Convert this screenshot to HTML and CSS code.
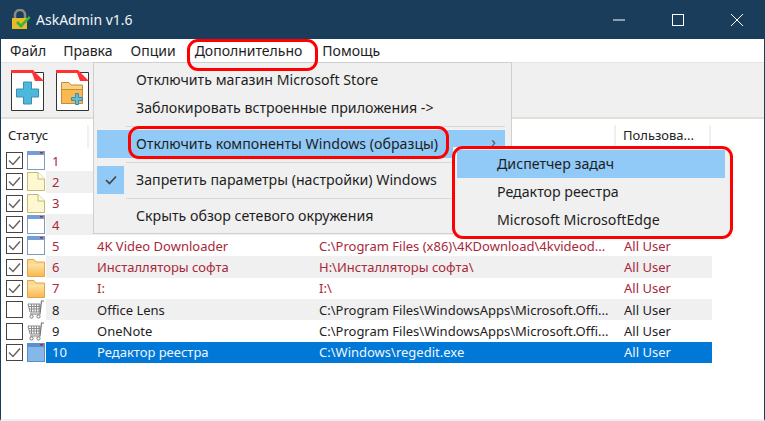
FILE: index.html
```html
<!DOCTYPE html>
<html lang="ru">
<head>
<meta charset="utf-8">
<title>AskAdmin v1.6</title>
<link rel="stylesheet" href="styles.css">
</head>
<body>
<svg class="defs" width="0" height="0">
  <defs>
    <linearGradient id="fold" x1="0" y1="0" x2="0" y2="1"><stop offset="0" stop-color="#fde4a6"/><stop offset="1" stop-color="#fbb84e"/></linearGradient>
  </defs>
  <symbol id="check" viewBox="0 0 17 17"><rect x=".5" y=".5" width="16" height="16" fill="#fff" stroke="#444"/><path d="M3 8.5 7 12.5 14 4.5" fill="none" stroke="#666" stroke-width="1.5"/></symbol>
  <symbol id="box" viewBox="0 0 17 17"><rect x=".5" y=".5" width="16" height="16" fill="#fff" stroke="#444"/></symbol>
  <symbol id="win" viewBox="0 0 18 19"><rect x=".5" y=".5" width="17" height="18" fill="#fff" stroke="#7f9cbc"/><rect x="1" y="1" width="16" height="3" fill="#6f9fdc"/><rect x="13" y="1" width="3" height="1.500" fill="#c8203c"/></symbol>
  <symbol id="winsel" viewBox="0 0 18 19"><rect x=".5" y=".5" width="17" height="18" fill="#84b8e8" stroke="#5b8fc8"/><rect x="1" y="1" width="16" height="3" fill="#5a8ed0"/><rect x="13" y="1" width="3" height="1.500" fill="#c8203c"/></symbol>
  <symbol id="note" viewBox="0 0 18 19"><path d="M.5.5H11L17.5 7V18.5H.5Z" fill="#fdf8d0" stroke="#c4b878"/><path d="M11 .5V7H17.5" fill="#fffde8" stroke="#c4b878"/></symbol>
  <symbol id="folder" viewBox="0 0 18 19"><path d="M.5 18.5V1.500H7L9 4H17.500V18.5Z" fill="#fcd98c" stroke="#dca750"/><path d="M1 6H17V18H1Z" fill="url(#fold)"/></symbol>
  <symbol id="cart" viewBox="0 0 18 19"><path d="M1 4H13V12H3ZM1.500 6.500H13M2 9H13M4.500 4V12M7 4V12M9.500 4V12M12 4V12" fill="none" stroke="#8a8a8a"/><path d="M17 1H14.500L13 14H3" fill="none" stroke="#777" stroke-width="1.200"/><circle cx="4.500" cy="16.500" r="1.600" fill="#fff" stroke="#777"/><circle cx="11.500" cy="16.500" r="1.600" fill="#fff" stroke="#777"/></symbol>
</svg>
<div class="window">
  <header class="titlebar">
    <svg class="appicon" width="20" height="21" viewBox="0 0 20 21"><path d="M4 10V6a5 5 0 0 1 10 0v4" fill="none" stroke="#8a8a80" stroke-width="2.500"/><rect x="1" y="9" width="15" height="11" fill="#e8bc28"/><path d="M7 12l3 3 8-8 1.500 2L10 19l-5-5Z" fill="#3cb43c"/></svg>
    <span class="apptitle">AskAdmin v1.6</span>
    <div class="winbtns">
      <svg width="14" height="14" viewBox="0 0 14 14"><path d="M1 7H13" stroke="#fff"/></svg>
      <svg width="14" height="14" viewBox="0 0 14 14"><rect x="1.500" y="1.500" width="11" height="11" fill="none" stroke="#fff"/></svg>
      <svg width="14" height="14" viewBox="0 0 14 14"><path d="M1 1 13 13M13 1 1 13" stroke="#fff"/></svg>
    </div>
  </header>
  <nav class="menubar">
    <span class="m1">Файл</span><span class="m2">Правка</span><span class="m3">Опции</span><span class="m4">Дополнительно</span><span>Помощь</span>
  </nav>
  <div class="toolbar">
    <svg class="tool" width="34" height="41" viewBox="0 0 34 41"><path d="M.500 2.500H32.500V40.500H.500Z" fill="#fff" stroke="#333"/><path d="M0 0H22L33 11H24L21 3H0Z" fill="#f33"/><path d="M12.500 12H20.500V19H27.500V27H20.500V34H12.500V27H5.500V19H12.500Z" fill="#4cb8dc" stroke="#3a8cb0"/></svg>
    <svg class="tool" width="34" height="41" viewBox="0 0 34 41"><path d="M.500 2.500H32.500V40.500H.500Z" fill="#fff" stroke="#333"/><path d="M0 0H22L33 11H24L21 3H0Z" fill="#f33"/><path d="M5.500 12.500H13L15 15H26.500V33.500H5.500Z" fill="#f8d080" stroke="#c88a3c"/><path d="M5.500 19.500H26.500V33.500H5.500Z" fill="#fbb84e" stroke="#c88a3c"/><path d="M19.500 23.500H22.500V27.500H26.500V30.500H22.500V34.500H19.500V30.500H15.500V27.500H19.500Z" fill="#5cc0dc" stroke="#3a8cb0"/></svg>
  </div>
  <main class="list">
    <div class="head">
      <span class="hc h-status">Статус</span><span class="hc h-path"></span><span class="hc h-user">Пользова...</span>
    </div>
    <div class="row r"><svg class="ck"><use href="#check"/></svg><svg class="ic"><use href="#win"/></svg><div class="band"><span class="num">1</span></div></div>
    <div class="row r alt"><svg class="ck"><use href="#check"/></svg><svg class="ic"><use href="#note"/></svg><div class="band"><span class="num">2</span></div></div>
    <div class="row r"><svg class="ck"><use href="#check"/></svg><svg class="ic"><use href="#note"/></svg><div class="band"><span class="num">3</span></div></div>
    <div class="row r alt"><svg class="ck"><use href="#check"/></svg><svg class="ic"><use href="#win"/></svg><div class="band"><span class="num">4</span></div></div>
    <div class="row r"><svg class="ck"><use href="#check"/></svg><svg class="ic"><use href="#win"/></svg><div class="band"><span class="num">5</span><span class="name">4K Video Downloader</span><span class="path">C:\Program Files (x86)\4KDownload\4kvideod...</span><span>All User</span></div></div>
    <div class="row r alt"><svg class="ck"><use href="#check"/></svg><svg class="ic"><use href="#folder"/></svg><div class="band"><span class="num">6</span><span class="name">Инсталляторы софта</span><span class="path">H:\Инсталляторы софта\</span><span>All User</span></div></div>
    <div class="row r"><svg class="ck"><use href="#check"/></svg><svg class="ic"><use href="#folder"/></svg><div class="band"><span class="num">7</span><span class="name">I:</span><span class="path">I:\</span><span>All User</span></div></div>
    <div class="row alt"><svg class="ck"><use href="#box"/></svg><svg class="ic"><use href="#cart"/></svg><div class="band"><span class="num">8</span><span class="name">Office Lens</span><span class="path">C:\Program Files\WindowsApps\Microsoft.Offi...</span><span>All User</span></div></div>
    <div class="row"><svg class="ck"><use href="#box"/></svg><svg class="ic"><use href="#cart"/></svg><div class="band"><span class="num">9</span><span class="name">OneNote</span><span class="path">C:\Program Files\WindowsApps\Microsoft.Offi...</span><span>All User</span></div></div>
    <div class="row sel"><svg class="ck"><use href="#check"/></svg><svg class="ic"><use href="#winsel"/></svg><div class="band"><span class="num">10</span><span class="name">Редактор реестра</span><span class="path">C:\Windows\regedit.exe</span><span>All User</span></div></div>
  </main>
</div>

<div class="menu mainmenu">
  <div class="mi">Отключить магазин Microsoft Store</div>
  <div class="mi">Заблокировать встроенные приложения -&gt;</div>
  <hr class="sep">
  <div class="mi hi">Отключить компоненты Windows (образцы)<span class="arrow">›</span></div>
  <hr class="sep">
  <div class="mi"><span class="tick"><svg width="14" height="12" viewBox="0 0 14 12"><path d="M2 6 5.500 9.500 12 2.500" fill="none" stroke="#444" stroke-width="1.700"/></svg></span>Запретить параметры (настройки) Windows</div>
  <hr class="sep">
  <div class="mi">Скрыть обзор сетевого окружения</div>
</div>
<div class="menu submenu">
  <div class="si hi">Диспетчер задач</div>
  <div class="si">Редактор реестра</div>
  <div class="si">Microsoft MicrosoftEdge</div>
</div>
<div class="mark mark1"></div>
<div class="mark mark2"></div>
<div class="mark mark3"></div>
</body>
</html>
```
FILE: styles.css
```css
* { box-sizing: border-box; }
html, body { margin: 0; padding: 0; }
body { width: 765px; height: 421px; overflow: hidden; position: relative; background: #fff; font-family: "Noto Sans", "Open Sans", sans-serif; font-size: 13px; color: #222; }
.defs { position: absolute; }
.window { height: 421px; display: flex; flex-direction: column; border-left: 1px solid #1b3d5c; border-right: 1px solid #1b3d5c; border-bottom: 2px solid #f0f0f0; }
.titlebar { height: 39px; margin: 0 -1px; background: #1b3d5c; display: flex; align-items: center; padding-left: 11px; color: #fff; flex: none; }
.appicon { margin-right: 5px; }
.apptitle { font-size: 14px; color: #f2f5f8; }
.winbtns { margin-left: auto; display: flex; gap: 45px; padding-right: 21px; }
.menubar { height: 23px; flex: none; display: flex; align-items: center; padding-left: 9px; background: #fff; color: #1e1e1e; font-size: 14px; }
.m1 { margin-right: 17px; } .m2 { margin-right: 18px; } .m3 { margin-right: 19px; } .m4 { margin-right: 20px; }
.toolbar { height: 57px; flex: none; background: #f0f0f0; border-top: 1px solid #e4e4e4; border-bottom: 2px solid #e2dfd6; display: flex; align-items: flex-start; gap: 11px; padding: 7px 0 0 10px; }
.tool { display: block; }
.list { flex: 1; background: #fff; }
.head { height: 31px; display: flex; padding-top: 6px; color: #222; }
.hc { height: 23px; border-right: 2px solid #f0f0f0; line-height: 20px; }
.h-status { width: 88px; padding-left: 7px; }
.h-path { width: 527px; }
.h-user { width: 95px; padding-left: 7px; }
.row { height: 21.3px; display: flex; align-items: center; padding-left: 5px; color: #1e1e1e; }
.ck { width: 17px; height: 17px; flex: none; }
.ic { width: 18px; height: 19px; flex: none; margin-left: 4px; }
.band { width: 666px; margin-left: 1px; height: 100%; display: flex; align-items: center; padding-left: 6px; white-space: nowrap; }
.alt .band { background: #f0f0f0; }
.r .band { color: #a8283a; }
.sel .band { background: #0078d7; color: #f0f6fc; }
.num { width: 45px; flex: none; }
.name { width: 222px; flex: none; }
.path { width: 305px; flex: none; }
.menu { position: absolute; background: #f0f0f0; font-size: 14.2px; color: #1e1e1e; }
.mainmenu { left: 93px; top: 62px; width: 419px; height: 172px; border: 1px solid #cfcfcf; padding: 3px 6px 0 3px; }
.mi { height: 28px; line-height: 27px; padding-left: 39px; position: relative; white-space: nowrap; }
.hi { background: #91c9f7; }
.sep { height: 1px; border: 0; background: #d8d8d8; margin: 4px 0 3px 29px; }
.arrow { position: absolute; right: 9px; top: -2px; font-size: 15px; color: #555; }
.tick { position: absolute; left: 0; top: 0; width: 27px; height: 28px; background: #91c9f7; display: flex; align-items: center; justify-content: center; }
.submenu { left: 453px; top: 147px; width: 279px; height: 90px; padding: 3px 7px 3px 4px; }
.si { height: 28px; line-height: 28px; padding-left: 40px; }
.mark { position: absolute; border: 3px solid #f00; border-radius: 11px; }
.mark1 { left: 187px; top: 39px; width: 131px; height: 32px; }
.mark2 { left: 128px; top: 126px; width: 321px; height: 33px; }
.mark3 { left: 452px; top: 146px; width: 281px; height: 93px; }
```
